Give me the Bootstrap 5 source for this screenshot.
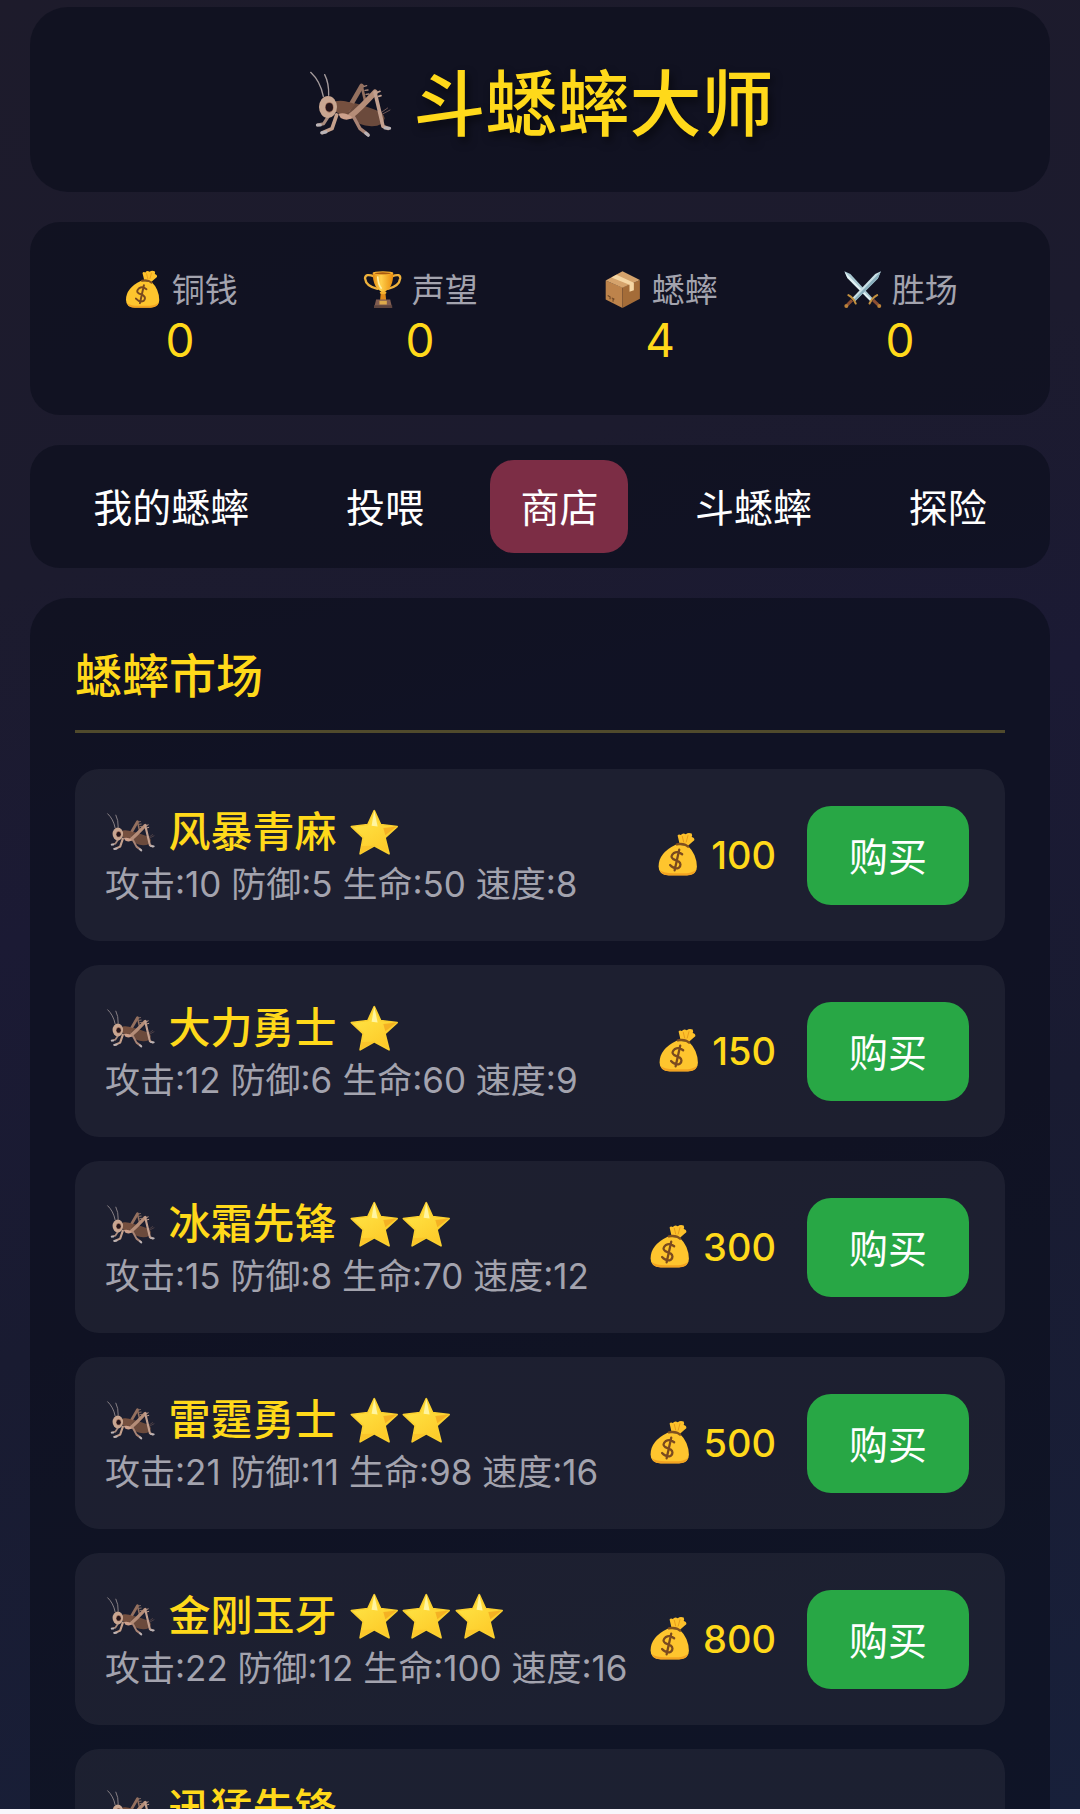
<!DOCTYPE html>
<html lang="zh-CN">
<head>
<meta charset="utf-8">
<meta name="viewport" content="width=device-width, initial-scale=1">
<title>斗蟋蟀大师</title>
<link rel="stylesheet" href="https://cdn.jsdelivr.net/npm/bootstrap@5.3.0/dist/css/bootstrap.min.css">
<style>
:root { --gold: #ffd91a; --muted-text: #a3a3ae; }
body { font-family: Inter, "Noto Sans CJK SC", sans-serif; background: #f8f6fc; color: #fff; }
.game-screen {
  background: linear-gradient(165deg, #1d1b2b 0%, #1c1b2e 28%, #1b1a34 45%, #191b31 65%, #18203a 100%);
  padding: 7px 30px 0;
}
.game-stack { gap: 30px; }
.panel-box { background: rgba(10, 14, 26, .6); border-radius: 30px; }
.panel-lg { border-radius: 38px; }
.gold-text { color: var(--gold); }
.emoji { width: 1.25em; height: 1.25em; flex: none; }
.game-header { padding: 41px 30px 32px; }
.game-title { font-size: 72px; line-height: 112px; font-weight: 500; gap: 17px; text-shadow: 3px 5px 8px rgba(0, 0, 0, .5); }
.stats-bar { padding: 43px 30px 50px; }
.stat-label { font-size: 33px; line-height: 50px; gap: 8px; color: var(--muted-text); }
.stat-value { font-size: 46px; line-height: 50px; }
.tab-bar { padding: 15px; }
.tab-btn { border: 0; background: none; color: #fff; font-size: 39px; line-height: 54px; padding: 21px 30px 18px; border-radius: 24px; }
.tab-btn.active { background: #7c2d45; }
.market { padding: 48px 45px; }
.market-title { font-size: 47px; line-height: 60px; font-weight: 500; padding-bottom: 24px; border-bottom: 3px solid #504a2c; margin-bottom: 36px; }
.market-list { gap: 24px; }
.cricket-row { background: rgba(255, 255, 255, .055); border-radius: 24px; min-height: 172px; padding: 28px 36px 28px 30px; }
.cricket-name { font-size: 42px; line-height: 52px; font-weight: 500; gap: 11px; margin-top: 6px; }
.cricket-info { font-size: 35px; line-height: 52px; color: var(--muted-text); }
.price { font-size: 38px; font-weight: 500; gap: 10px; }
.buy-area { gap: 31px; }
.buy-btn { background: #28a745; color: #fff; border: 0; border-radius: 24px; font-size: 39px; line-height: 60px; padding: 21px 42px 18px; }
.bottom-strip { height: 5px; flex: none; }
</style>
</head>
<body>
<svg width="0" height="0" class="position-absolute" aria-hidden="true">
  <defs>
    <linearGradient id="cup" x1="0" x2="1"><stop offset="0" stop-color="#e58a10"/><stop offset=".4" stop-color="#ffd04c"/><stop offset="1" stop-color="#e88b0c"/></linearGradient>
    <linearGradient id="stargrad" x1="0" y1="0" x2=".7" y2="1"><stop offset="0" stop-color="#ffe94a"/><stop offset="1" stop-color="#fdc928"/></linearGradient>
    <symbol id="i-cricket" viewBox="45 36 270 270">
      <g fill="none" stroke-linecap="round" stroke-linejoin="round">
        <path d="M59 76Q88 103 97 148M101 83Q114 108 113 145" stroke="#a59b9c" stroke-width="4"/>
        <path d="M270 197l20-14M273 202l24-13" stroke="#6f5755" stroke-width="3"/>
        <path d="M137 163Q190 163 240 184Q282 197 281 214Q277 239 241 238Q202 237 180 211Q145 213 135 190Z" fill="#6b4a3c" stroke="none"/>
        <path d="M171 188L212 117" stroke="#94705f" stroke-width="14"/>
        <path d="M212 117L223 164" stroke="#94705f" stroke-width="8"/>
        <path d="M219 118l8 -2M222 130l9-1M225 142l9-1" stroke="#a98878" stroke-width="4"/>
        <path d="M133 163Q157 157 193 172L164 205L133 194Z" fill="#76503f" stroke="none"/>
        <path d="M118 199L98 230L80 234" stroke="#a98b7d" stroke-width="9"/>
        <path d="M137 204L123 245L95 257" stroke="#c4a08c" stroke-width="11"/>
        <path d="M188 210L207 245L231 263" stroke="#a98475" stroke-width="10"/>
        <path d="M179 207Q205 187 252 136" stroke="#b58d78" stroke-width="17"/>
        <path d="M252 136L276 238L291 244" stroke="#c3a08f" stroke-width="11"/>
        <path d="M260 136l7-3M263 148l7-2" stroke="#c3a08f" stroke-width="5"/>
        <path d="M142 201Q162 194 184 211Q170 224 149 213Z" fill="#cda08b" stroke="none"/>
        <path d="M79 234l9 0M92 257l13-2M224 258l8 7M282 243l14 1" stroke="#b9b3b7" stroke-width="9"/>
      </g>
      <ellipse cx="111" cy="180" rx="27" ry="33" fill="#c9a691"/>
      <ellipse cx="115" cy="181" rx="13" ry="16" fill="#a57560"/>
      <ellipse cx="115" cy="181" rx="11" ry="13" fill="#26151a"/>
    </symbol>
    <symbol id="i-star" viewBox="755 21 156 156">
      <path d="M833 35L852 76L901 82L865 115L877 163L833 139L791 163L800 115L765 82L814 76Z" fill="url(#stargrad)" stroke="#fbd02f" stroke-width="5" stroke-linejoin="round"/>
      <path d="M833 35L843 82L825 80Z" fill="#fff5a0"/>
      <path d="M860 86L900 82L866 108Z" fill="#f0a51f" opacity=".75"/>
      <path d="M833 139L791 163L796 140Z" fill="#f8bd27" opacity=".6"/>
    </symbol>
    <symbol id="i-bag" viewBox="160 252 145 145">
      <path d="M238 291L232 266Q235 260 242 264Q248 256 257 262Q265 255 275 260Q278 267 275 270Q285 273 283 280Q271 290 264 297Z" fill="#fdc12b"/>
      <path d="M246 267l5 20M264 265l-6 22" stroke="#e69a1a" stroke-width="3" fill="none"/>
      <path d="M226 294Q174 319 174 360Q174 387 205 387H262Q291 386 291 361Q290 322 263 297Z" fill="#fec52e"/>
      <path d="M178 372Q190 381 219 381H260Q282 379 289 369Q285 388 260 388H205Q183 387 178 372Z" fill="#f2a221"/>
      <path d="M230 293Q251 288 264 300" stroke="#81501e" stroke-width="7" fill="none" stroke-linecap="round"/>
      <path d="M246 323Q232 312 221 319Q207 331 219 338L235 345Q246 354 236 364Q223 371 209 356M237 309L223 372" fill="none" stroke="#7a4a1f" stroke-width="7" stroke-linecap="round"/>
    </symbol>
    <symbol id="i-trophy" viewBox="786 31 123 123">
      <path d="M822 53Q796 43 795 59Q798 83 832 90M875 53Q901 43 900 59Q897 83 863 90" fill="none" stroke="#eeb13c" stroke-width="7" stroke-linecap="round"/>
      <path d="M843 92h12l3 32h-18z" fill="#e08a18"/>
      <path d="M818 43H879Q880 91 849 100Q818 91 818 43Z" fill="url(#cup)"/>
      <ellipse cx="848.500" cy="43" rx="31" ry="5" fill="#f7b02f"/><ellipse cx="848" cy="44" rx="24" ry="3" fill="#a95b10"/>
      <path d="M833 55Q834 76 843 88" stroke="#fff0a2" stroke-width="5" fill="none" stroke-linecap="round"/>
      <ellipse cx="849" cy="102" rx="10" ry="4" fill="#f5b12e"/>
      <path d="M828 122H870L876 147H822Z" fill="#805c50"/><path d="M822 139h54v8h-54z" fill="#5d443f"/><path d="M838 126h22v11h-22z" fill="#ddaa4b"/>
    </symbol>
    <symbol id="i-box" viewBox="67 31 123 123">
      <path d="M78 65L128 86V147L78 122Z" fill="#bd834b"/>
      <path d="M180 64L128 86V147L180 120Z" fill="#a46c38"/>
      <path d="M78 65L128 38L180 64L128 87Z" fill="#d5a36c"/>
      <path d="M95 56L110 48L162 72V94L149 99V78Z" fill="#f5d6a4"/>
      <path d="M84 110l7 4v7M96 117l8 4M100 119v10" stroke="#694323" stroke-width="3" fill="none"/>
    </symbol>
    <symbol id="i-swords" viewBox="787 31 123 123">
      <path d="M794 38L812 46L881 121L872 127L803 58Z" fill="#a9c9d2"/><path d="M795 39L877 124L872 127L803 58Z" fill="#e2f2f5"/>
      <path d="M903 38L886 46L817 118L826 127L894 59Z" fill="#c9e0e6"/><path d="M903 38L894 59L826 127L822 122Z" fill="#89aebc"/>
      <path d="M806 109Q821 117 828 134M892 109Q877 117 869 134" fill="none" stroke="#c3913f" stroke-width="6" stroke-linecap="round"/>
      <path d="M817 124L803 138M880 124L895 138" stroke="#8c4e32" stroke-width="9"/>
      <circle cx="800" cy="141" r="6" fill="#bd823a"/><circle cx="898" cy="141" r="6" fill="#bd823a"/>
    </symbol>
  </defs>
</svg>

<div class="vh-100 d-flex flex-column overflow-hidden">
  <main class="game-screen flex-grow-1 overflow-hidden">
    <div class="game-stack d-flex flex-column">

      <header class="panel-box panel-lg game-header">
        <h1 class="game-title gold-text d-flex justify-content-center align-items-center m-0"><svg class="emoji" aria-hidden="true"><use href="#i-cricket"/></svg>斗蟋蟀大师</h1>
      </header>

      <section class="panel-box stats-bar">
        <div class="row g-0 text-center">
          <div class="col">
            <div class="stat-label d-flex justify-content-center align-items-center"><svg class="emoji" aria-hidden="true"><use href="#i-bag"/></svg>铜钱</div>
            <div class="stat-value gold-text">0</div>
          </div>
          <div class="col">
            <div class="stat-label d-flex justify-content-center align-items-center"><svg class="emoji" aria-hidden="true"><use href="#i-trophy"/></svg>声望</div>
            <div class="stat-value gold-text">0</div>
          </div>
          <div class="col">
            <div class="stat-label d-flex justify-content-center align-items-center"><svg class="emoji" aria-hidden="true"><use href="#i-box"/></svg>蟋蟀</div>
            <div class="stat-value gold-text">4</div>
          </div>
          <div class="col">
            <div class="stat-label d-flex justify-content-center align-items-center"><svg class="emoji" aria-hidden="true"><use href="#i-swords"/></svg>胜场</div>
            <div class="stat-value gold-text">0</div>
          </div>
        </div>
      </section>

      <nav class="panel-box tab-bar d-flex justify-content-around">
        <button type="button" class="tab-btn">我的蟋蟀</button>
        <button type="button" class="tab-btn">投喂</button>
        <button type="button" class="tab-btn active" aria-current="page">商店</button>
        <button type="button" class="tab-btn">斗蟋蟀</button>
        <button type="button" class="tab-btn">探险</button>
      </nav>

      <section class="panel-box panel-lg market">
        <h2 class="market-title gold-text">蟋蟀市场</h2>
        <div class="market-list d-flex flex-column">

          <article class="cricket-row d-flex justify-content-between align-items-center">
            <div>
              <div class="cricket-name gold-text d-flex align-items-center"><svg class="emoji" aria-hidden="true"><use href="#i-cricket"/></svg><span>风暴青麻</span><span class="d-flex"><svg class="emoji" aria-hidden="true"><use href="#i-star"/></svg></span></div>
              <div class="cricket-info">攻击:10 防御:5 生命:50 速度:8</div>
            </div>
            <div class="buy-area d-flex align-items-center">
              <span class="price gold-text d-flex align-items-center"><svg class="emoji" aria-hidden="true"><use href="#i-bag"/></svg>100</span>
              <button type="button" class="buy-btn">购买</button>
            </div>
          </article>

          <article class="cricket-row d-flex justify-content-between align-items-center">
            <div>
              <div class="cricket-name gold-text d-flex align-items-center"><svg class="emoji" aria-hidden="true"><use href="#i-cricket"/></svg><span>大力勇士</span><span class="d-flex"><svg class="emoji" aria-hidden="true"><use href="#i-star"/></svg></span></div>
              <div class="cricket-info">攻击:12 防御:6 生命:60 速度:9</div>
            </div>
            <div class="buy-area d-flex align-items-center">
              <span class="price gold-text d-flex align-items-center"><svg class="emoji" aria-hidden="true"><use href="#i-bag"/></svg>150</span>
              <button type="button" class="buy-btn">购买</button>
            </div>
          </article>

          <article class="cricket-row d-flex justify-content-between align-items-center">
            <div>
              <div class="cricket-name gold-text d-flex align-items-center"><svg class="emoji" aria-hidden="true"><use href="#i-cricket"/></svg><span>冰霜先锋</span><span class="d-flex"><svg class="emoji" aria-hidden="true"><use href="#i-star"/></svg><svg class="emoji" aria-hidden="true"><use href="#i-star"/></svg></span></div>
              <div class="cricket-info">攻击:15 防御:8 生命:70 速度:12</div>
            </div>
            <div class="buy-area d-flex align-items-center">
              <span class="price gold-text d-flex align-items-center"><svg class="emoji" aria-hidden="true"><use href="#i-bag"/></svg>300</span>
              <button type="button" class="buy-btn">购买</button>
            </div>
          </article>

          <article class="cricket-row d-flex justify-content-between align-items-center">
            <div>
              <div class="cricket-name gold-text d-flex align-items-center"><svg class="emoji" aria-hidden="true"><use href="#i-cricket"/></svg><span>雷霆勇士</span><span class="d-flex"><svg class="emoji" aria-hidden="true"><use href="#i-star"/></svg><svg class="emoji" aria-hidden="true"><use href="#i-star"/></svg></span></div>
              <div class="cricket-info">攻击:21 防御:11 生命:98 速度:16</div>
            </div>
            <div class="buy-area d-flex align-items-center">
              <span class="price gold-text d-flex align-items-center"><svg class="emoji" aria-hidden="true"><use href="#i-bag"/></svg>500</span>
              <button type="button" class="buy-btn">购买</button>
            </div>
          </article>

          <article class="cricket-row d-flex justify-content-between align-items-center">
            <div>
              <div class="cricket-name gold-text d-flex align-items-center"><svg class="emoji" aria-hidden="true"><use href="#i-cricket"/></svg><span>金刚玉牙</span><span class="d-flex"><svg class="emoji" aria-hidden="true"><use href="#i-star"/></svg><svg class="emoji" aria-hidden="true"><use href="#i-star"/></svg><svg class="emoji" aria-hidden="true"><use href="#i-star"/></svg></span></div>
              <div class="cricket-info">攻击:22 防御:12 生命:100 速度:16</div>
            </div>
            <div class="buy-area d-flex align-items-center">
              <span class="price gold-text d-flex align-items-center"><svg class="emoji" aria-hidden="true"><use href="#i-bag"/></svg>800</span>
              <button type="button" class="buy-btn">购买</button>
            </div>
          </article>

          <article class="cricket-row d-flex align-items-start">
            <div class="cricket-name gold-text d-flex align-items-center"><svg class="emoji" aria-hidden="true"><use href="#i-cricket"/></svg><span>迅猛先锋</span></div>
          </article>

        </div>
      </section>
    </div>
  </main>
  <div class="bottom-strip"></div>
</div>
<script src="https://cdn.jsdelivr.net/npm/bootstrap@5.3.0/dist/js/bootstrap.bundle.min.js"></script>
</body>
</html>
